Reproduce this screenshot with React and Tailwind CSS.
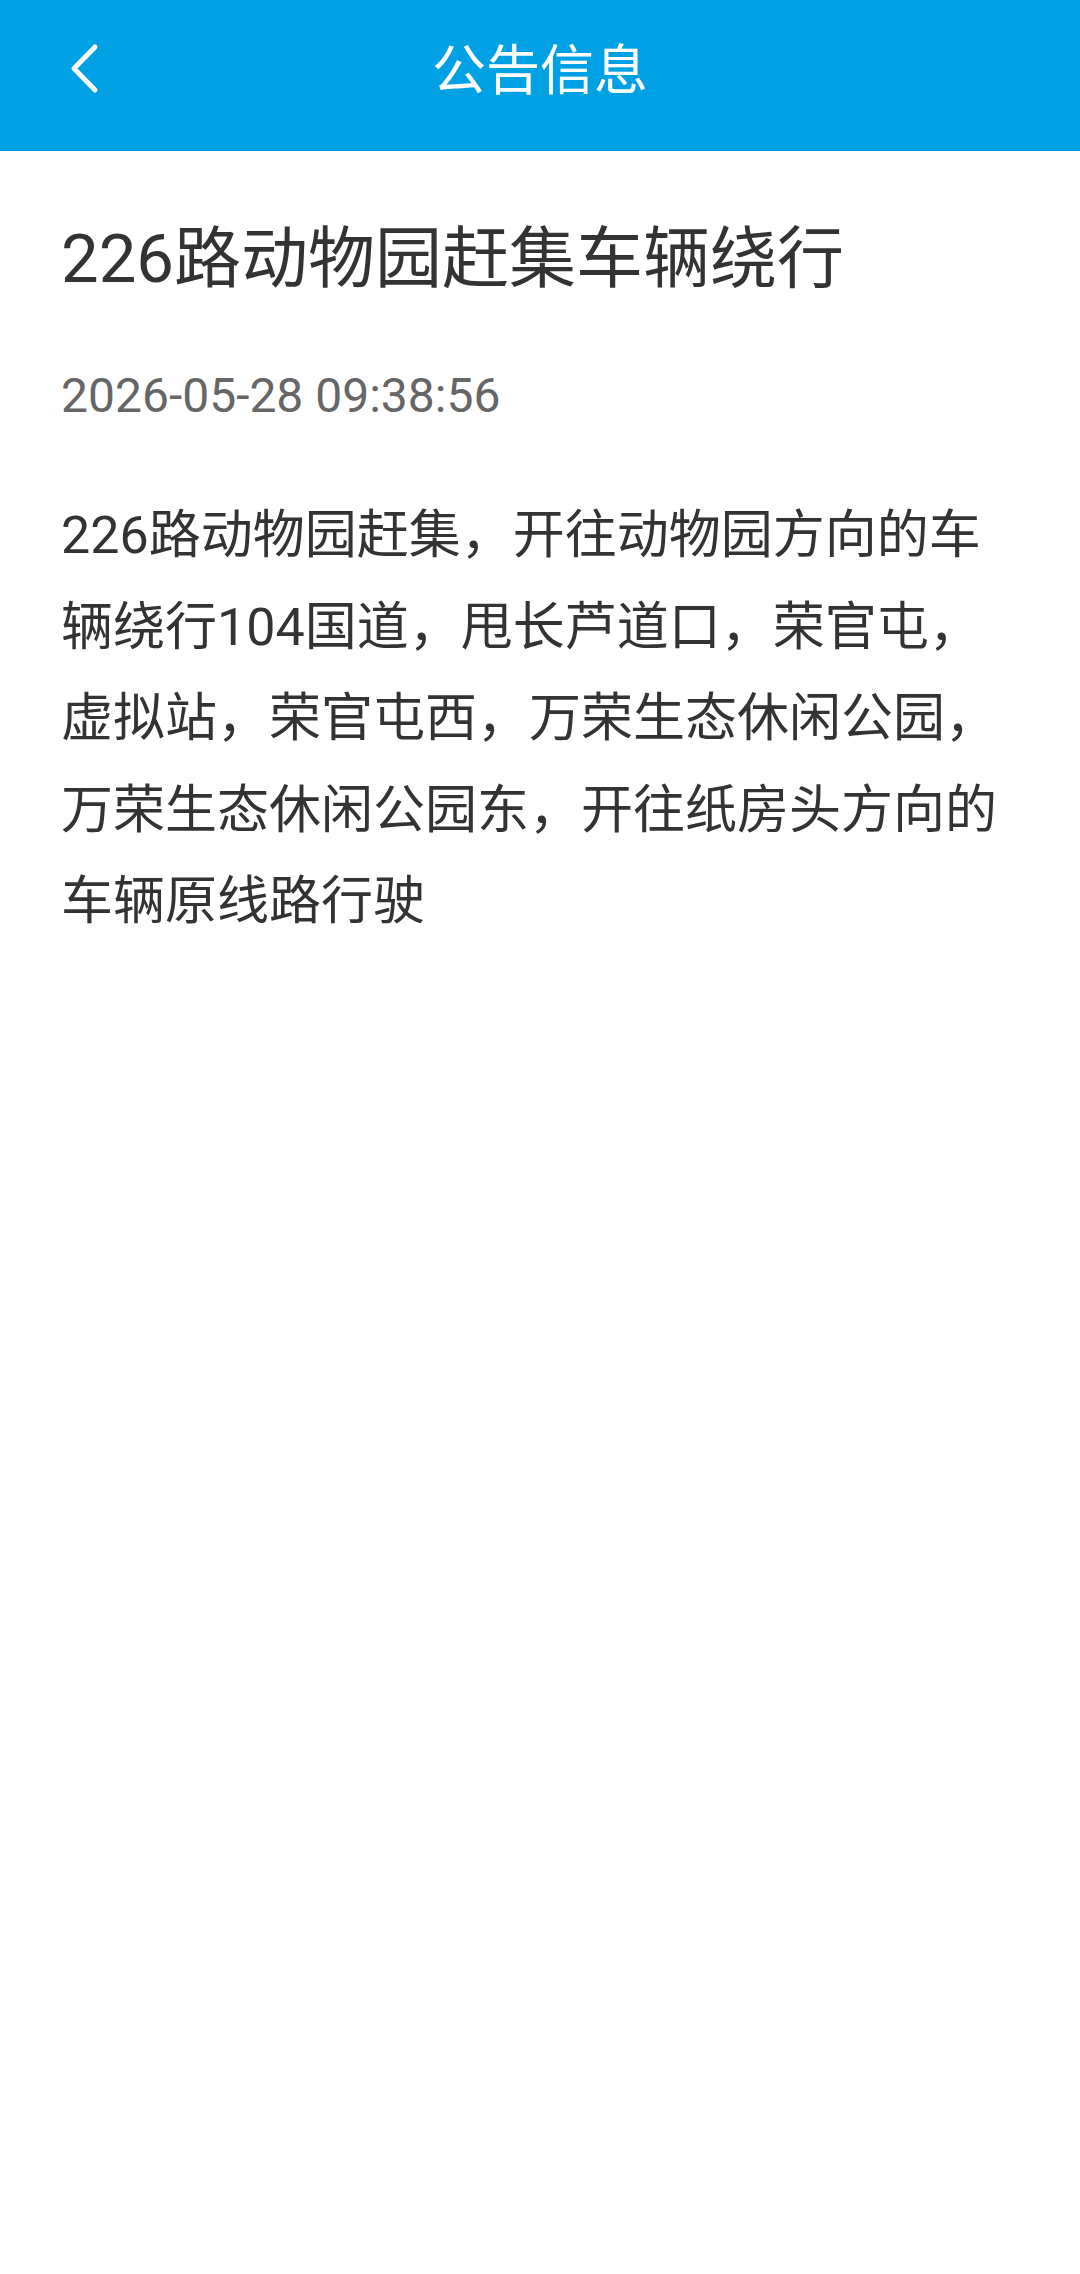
import React from 'react';

const notice = {
  title: '226路动物园赶集车辆绕行',
  time: '2026-05-28 09:38:56',
  body: '226路动物园赶集，开往动物园方向的车辆绕行104国道，甩长芦道口，荣官屯，虚拟站，荣官屯西，万荣生态休闲公园，万荣生态休闲公园东，开往纸房头方向的车辆原线路行驶',
};

function BackIcon() {
  return (
    <svg width="34" height="54" viewBox="0 0 34 54" fill="none">
      <path d="M25 5 L4 26.5 L25 48" stroke="#ffffff" strokeWidth="5" strokeLinecap="round" strokeLinejoin="round" />
    </svg>
  );
}

export default function App() {
  return (
    <div
      className="min-h-[2274px] w-[1080px] bg-white"
      style={{ fontFamily: 'Roboto, "Noto Sans CJK SC", sans-serif' }}
    >
      <header className="relative flex h-[151px] items-center justify-center bg-[#00a0e4] pb-[8px]">
        <button className="absolute left-[70px] top-[42px] flex items-center" aria-label="返回">
          <BackIcon />
        </button>
        <h1 className="text-[54px] font-normal leading-none text-white">公告信息</h1>
      </header>

      <main className="px-[61px]">
        <h2 className="mt-[68px] text-[67px] font-normal leading-[80px] text-[#333333]">{notice.title}</h2>
        <p className="mt-[69px] text-[48px] leading-[56px] text-[#666666]">{notice.time}</p>
        <p className="mt-[66px] text-[52px] leading-[91.5px] text-[#333333]">{notice.body}</p>
      </main>
    </div>
  );
}
